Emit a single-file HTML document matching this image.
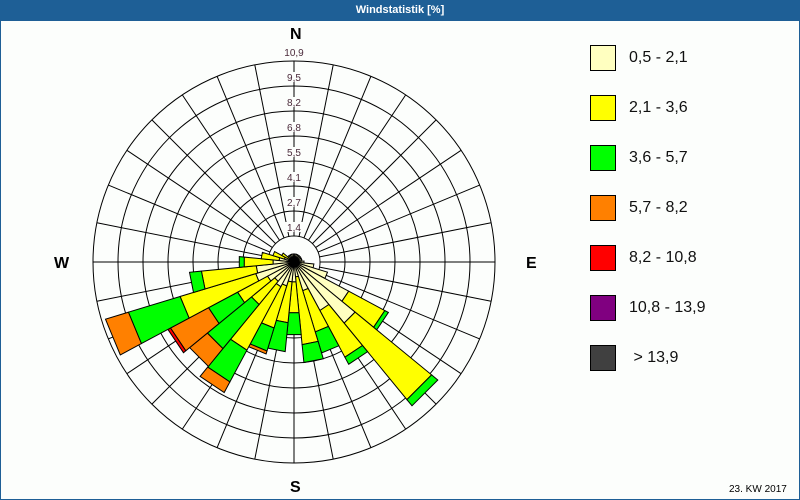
<!DOCTYPE html>
<html><head><meta charset="utf-8">
<style>
html,body{margin:0;padding:0;}
body{width:800px;height:500px;overflow:hidden;background:#fcfefc;font-family:"Liberation Sans",sans-serif;}
#wrap{position:absolute;left:0;top:0;width:798px;height:499px;border:1px solid #1e5f96;border-top:none;background:#fcfefc;}
#title{position:absolute;left:0;top:0;width:800px;height:21px;background:#1e5f96;color:#fff;font-size:11px;font-weight:bold;text-align:center;line-height:20px;}
.lg{position:absolute;left:590px;width:24px;height:24px;border:1px solid #000;}
.lt{position:absolute;left:629px;font-size:16px;color:#101010;line-height:20px;}
.cp{position:absolute;font-size:16px;font-weight:bold;color:#000;}
</style></head><body>
<div id="wrap"></div>
<div id="title">Windstatistik [%]</div>
<svg id="s" width="800" height="500" style="position:absolute;left:0;top:0"></svg>
<div class="cp" style="left:290px;top:26px">N</div>
<div class="cp" style="left:54px;top:255px">W</div>
<div class="cp" style="left:526px;top:255px">E</div>
<div class="cp" style="left:290px;top:479px">S</div>
<div class="lg" style="top:45px;background:#ffffc0"></div><div class="lt" style="top:48px">0,5 - 2,1</div>
<div class="lg" style="top:95px;background:#ffff00"></div><div class="lt" style="top:98px">2,1 - 3,6</div>
<div class="lg" style="top:145px;background:#00ff00"></div><div class="lt" style="top:148px">3,6 - 5,7</div>
<div class="lg" style="top:195px;background:#ff8000"></div><div class="lt" style="top:198px">5,7 - 8,2</div>
<div class="lg" style="top:245px;background:#ff0000"></div><div class="lt" style="top:248px">8,2 - 10,8</div>
<div class="lg" style="top:295px;background:#800080"></div><div class="lt" style="top:298px">10,8 - 13,9</div>
<div class="lg" style="top:345px;background:#404040"></div><div class="lt" style="top:348px">&nbsp;&gt; 13,9</div>
<div style="position:absolute;left:729px;top:484px;font-size:10px;color:#000">23. KW 2017</div>
<script>
var cx=294,cy=262,s=document.getElementById('s'),h='';
function P(r,a){a=a*Math.PI/180;return (cx+r*Math.sin(a)).toFixed(1)+','+(cy-r*Math.cos(a)).toFixed(1);}
for(var k=0;k<8;k++){h+='<circle cx="'+cx+'" cy="'+cy+'" r="'+(26+25*k)+'" fill="none" stroke="#000" stroke-width="1"/>';}
for(var i=0;i<32;i++){var a=i*11.25;h+='<line x1="'+P(26,a).split(',')[0]+'" y1="'+P(26,a).split(',')[1]+'" x2="'+P(201,a).split(',')[0]+'" y2="'+P(201,a).split(',')[1]+'" stroke="#000" stroke-width="1"/>';}
h+='<circle cx="'+cx+'" cy="'+cy+'" r="25.5" fill="#fcfefc"/>';
var C={l:'#ffffc0',y:'#ffff00',g:'#00ff00',o:'#ff8000',r:'#ff0000'};
var D={0:'l8',1:'l8',2:'l8',3:'l8',4:'l8',5:'l8',6:'l8',7:'l8',8:'l10',9:'l20',10:'l35',
11:'l62 y103 g107',12:'l79 y178 g186',13:'l55 y108 g116',14:'l30 y73 g95',15:'l15 y83 g101',
16:'l20 y51 g73',17:'l20 y61 g90',18:'l25 y69 g93 o96',19:'l28 y100 g136 o148',20:'l25 y55 g112 o135',
21:'l30 y64 g97 o140 r143',22:'l40 y119 g173 o197',23:'l38 y93 g105',24:'l21 y50 g55',25:'l15 y33',
26:'l10 y22',27:'y14',28:'l8',29:'l8',30:'l8',31:'l8'};
for(var d in D){var b=d*11.25,r0=0,seg=D[d].split(' ');
 for(var j=0;j<seg.length;j++){var c=seg[j][0],r1=+seg[j].slice(1);
  h+='<polygon points="'+P(r0,b-5.625)+' '+P(r1,b-5.625)+' '+P(r1,b+5.625)+' '+P(r0,b+5.625)+'" fill="'+C[c]+'" stroke="#000" stroke-width="1" stroke-linejoin="miter"/>';
  r0=r1;}}
var L=['1,4','2,7','4,1','5,5','6,8','8,2','9,5','10,9'];
for(var k=0;k<8;k++){var y=cy-(26+25*k)-9;
 h+='<rect x="'+(cx-9)+'" y="'+(y-5)+'" width="18" height="10" fill="#fcfefc"/>';
 h+='<text x="'+cx+'" y="'+(y+4)+'" font-family="Liberation Sans,sans-serif" font-size="10" fill="#4a2a3a" text-anchor="middle">'+L[k]+'</text>';}
s.innerHTML=h;
</script>
</body></html>
